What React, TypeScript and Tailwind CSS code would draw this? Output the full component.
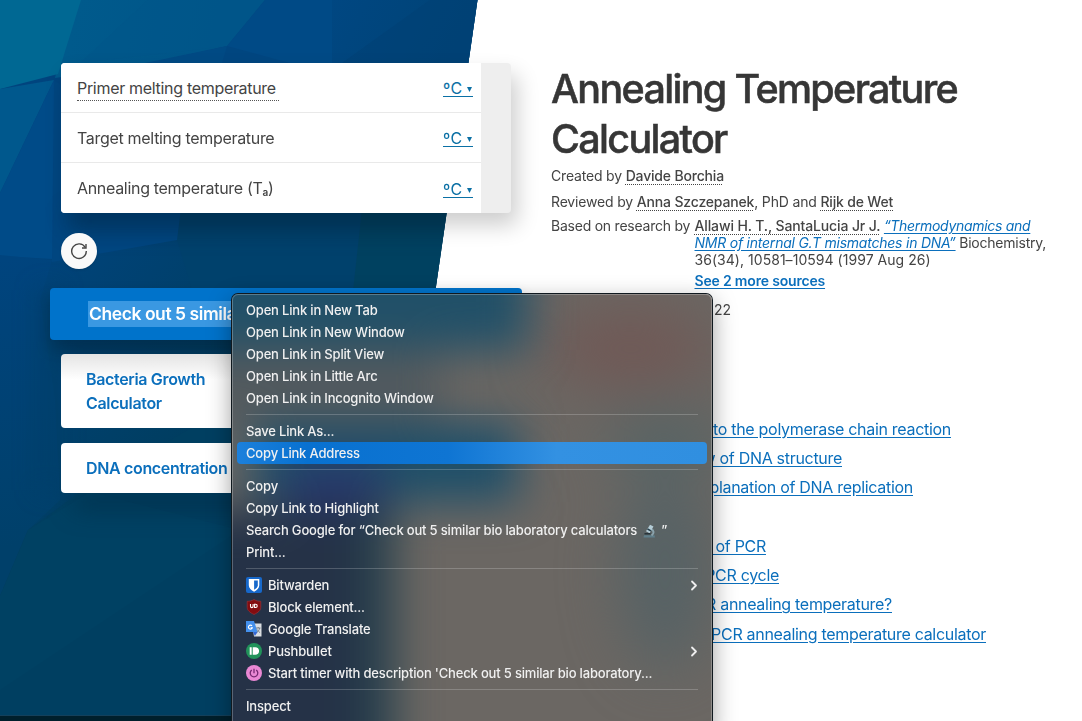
import type { ReactNode } from "react";

function Backdrop() {
  return (
    <svg className="absolute inset-0" width="1082" height="721" viewBox="0 0 1082 721">
      <defs>
        <clipPath id="slant">
          <polygon points="0,0 477.5,0 373,721 0,721" />
        </clipPath>
        <linearGradient id="lower" gradientUnits="userSpaceOnUse" x1="20" y1="230" x2="230" y2="420">
          <stop offset="0" stopColor="#00447e" />
          <stop offset="0.45" stopColor="#004170" />
          <stop offset="1" stopColor="#003d5e" />
        </linearGradient>
        <linearGradient id="left" gradientUnits="userSpaceOnUse" x1="0" y1="260" x2="50" y2="540">
          <stop offset="0" stopColor="#00447e" />
          <stop offset="1" stopColor="#00406a" />
        </linearGradient>
        <linearGradient id="topLeft" gradientUnits="userSpaceOnUse" x1="80" y1="0" x2="240" y2="40">
          <stop offset="0" stopColor="#005a8c" />
          <stop offset="1" stopColor="#005488" />
        </linearGradient>
        <linearGradient id="topRight" gradientUnits="userSpaceOnUse" x1="330" y1="0" x2="450" y2="60">
          <stop offset="0" stopColor="#004782" />
          <stop offset="1" stopColor="#004376" />
        </linearGradient>
        <filter id="soft" colorInterpolationFilters="sRGB"><feGaussianBlur stdDeviation="12" /></filter>
      </defs>
      <g clipPath="url(#slant)">
        <rect width="490" height="721" fill="url(#lower)" />
        <polygon points="0,0 490,0 490,63 55,78" fill="#004680" />
        <polygon points="75,0 265,0 227,46 150,63 55,78" fill="url(#topLeft)" />
        <polygon points="148,0 265,0 227,46 80,63" fill="#00568a" opacity=".5" />
        <polygon points="0,0 81,0 58,74 0,89" fill="#006893" />
        <polygon points="265,0 332,0 332,63 290,63 227,46" fill="#004a86" />
        <polygon points="227,46 222,63 145,63" fill="#004a84" />
        <polygon points="332,0 480,0 470,63 332,63" fill="url(#topRight)" />
        <polygon points="430,0 480,0 470,63 342,63" fill="#004073" opacity=".5" />
        <polygon points="0,89 54,80 0,193" fill="#00588d" />
        <polygon points="0,193 54,80 70,260 0,256" fill="#004b88" />
        <polygon points="54,80 220,200 177,240 52,262" fill="#004680" />
        <polygon points="177,240 182,200 460,200 435,300 195,300" fill="#00416c" />
        <polygon points="363,200 460,200 436,300 352,300" fill="#004160" />
        <polygon points="0,255 52,260 40,300 55,400 60,500 28,530 0,596" fill="url(#left)" />
        <polygon points="28,530 80,492 240,400 373,400 373,721 0,721 0,596" fill="#003f61" />
        <polygon points="28,530 90,492 240,530 0,690 0,596" fill="#004163" />
        <g filter="url(#soft)">
          <rect x="40" y="290" width="18" height="200" fill="#003f68" opacity=".8" />
          <rect x="70" y="214" width="400" height="14" fill="#002844" opacity=".45" />
          <rect x="62" y="340" width="300" height="20" fill="#00253e" opacity=".45" />
          <rect x="74" y="490" width="200" height="20" fill="#00253e" opacity=".5" />
        </g>
      </g>
      <rect y="715" width="373" height="6" fill="#001f2b" />
      <rect y="715" width="373" height="1" fill="#14405a" />
    </svg>
  );
}

function Unit() {
  return (
    <span className="mt-[2px] flex h-[17px] w-[30px] items-center border-b border-[#0b70a5] text-[16px] leading-[16px] text-[#0b70a5]">
      <span className="tracking-[0.2px]">ºC</span>
      <svg className="ml-auto mr-px mt-[3px]" width="5" height="5" viewBox="0 0 5 5"><path d="M0 0h5L2.500 5z" fill="currentColor" /></svg>
    </span>
  );
}

function Row({ children, last }: { children: ReactNode; last?: boolean }) {
  return (
    <div className={last ? "flex h-[50px] items-center justify-between pl-4 pr-2" : "flex h-[50px] items-center justify-between border-b border-[#e9e9e9] pl-4 pr-2"}>
      {children}
      <Unit />
    </div>
  );
}

function Similar({ children, tall }: { children: ReactNode; tall?: boolean }) {
  return (
    <div className={tall ? "mt-[14px] flex h-[74px] w-[450px] items-center rounded bg-white bg-linear-to-b from-[#e4e4e4] via-white via-35% to-white pl-[25px]" : "mt-[15px] flex h-[50px] w-[450px] items-center rounded bg-white pl-[25px]"}>
      <div className="w-[170px] whitespace-nowrap text-[16px] font-semibold leading-6 tracking-[-0.34px] text-[#0b6fbc]">{children}</div>
    </div>
  );
}

function Person({ children }: { children: ReactNode }) {
  return <span className="font-medium underline decoration-dotted decoration-1 underline-offset-[3px]">{children}</span>;
}

function Item({ children, icon, arrow, active }: { children: ReactNode; icon?: ReactNode; arrow?: boolean; active?: boolean }) {
  return (
    <div className={active ? "mx-[5px] flex h-[22px] items-center rounded-[4px] bg-[linear-gradient(90deg,#1c80dc_0%,#0871d0_15%,#0f75d3_45%,#3391e2_68%,#308fe0_100%)] px-[9px]" : "flex h-[22px] items-center px-[14px]"}>
      {icon && <span className="mr-1.5 flex size-4 shrink-0">{icon}</span>}
      <span className="flex items-center whitespace-nowrap pt-[2px]">{children}</span>
      {arrow && (
        <svg className="ml-auto" width="8" height="12" viewBox="0 0 8 12" fill="none" stroke="#eee" strokeWidth="1.8" strokeLinecap="round" strokeLinejoin="round">
          <path d="M2 2.500 6 6.500 2 10.500" />
        </svg>
      )}
    </div>
  );
}

function Separator() {
  return (
    <div className="flex h-[11px] items-center px-[14px]">
      <div className="h-px w-full bg-white/20" />
    </div>
  );
}

const bitwarden = (
  <svg viewBox="0 0 16 16">
    <rect width="16" height="16" rx="2" fill="#1768ca" />
    <path d="M2.800 2h10.500v6.200c0 3-2.400 4.800-5.200 6.500-2.900-1.700-5.300-3.500-5.300-6.500z" fill="#fff" />
    <path d="M8.100 3.500h3.700v4.700c0 1.900-1.500 3.300-3.700 4.600z" fill="#1768ca" />
  </svg>
);
const ublock = (
  <svg viewBox="0 0 16 16">
    <path d="M8 .5c2 1.300 4.400 1.800 6.800 1.800v6c0 3.200-2.700 5.200-6.800 7.200-4.100-2-6.800-4-6.800-7.200v-6C3.600 2.300 6 1.800 8 .5z" fill="#830c10" stroke="#a0383c" strokeWidth=".6" />
    <path d="M4.500 5v2.300a1.300 1.300 0 0 0 2.600 0V5M8.600 5.300v3.200h1a1.600 1.600 0 0 0 0-3.200z" fill="none" stroke="#fff" strokeWidth="1.100" />
  </svg>
);
const translate = (
  <svg viewBox="0 0 16 16">
    <path d="M6 2.500h9.500v13H8z" fill="#dcdfe3" />
    <path d="M0 0h8l3.600 11H0z" fill="#4490ed" />
    <path d="m7 11 4.600 0-2.700 4z" fill="#3367d6" />
    <path d="M6 4.900a2 2 0 1 0 .3 1.900H4.600" fill="none" stroke="#fff" strokeWidth="1.100" />
    <path d="M10 7h4.500M12.200 6v1M13.700 7c-.4 2-1.500 3.300-2.900 4.400M11.300 8.500c.6 1.500 1.700 2.400 2.800 3.200" fill="none" stroke="#6d7986" strokeWidth=".9" />
  </svg>
);
const pushbullet = (
  <svg viewBox="0 0 16 16">
    <circle cx="8" cy="8" r="8" fill="#21935a" />
    <path d="M3.700 4.200h2v7.600h-2zM6.700 4.200h2.500c2.400 0 3.900 1.500 3.900 3.800s-1.500 3.800-3.900 3.800H6.700z" fill="#fff" />
  </svg>
);
const toggl = (
  <svg viewBox="0 0 16 16">
    <circle cx="8" cy="8" r="8" fill="#ea88d4" />
    <path d="M8 3.800v4.400M5.800 5a3.800 3.800 0 1 0 4.400 0" fill="none" stroke="#762a72" strokeWidth="1.300" />
  </svg>
);

function Microscope() {
  return (
    <svg className="ml-[6px] mr-[5px]" width="13" height="14" viewBox="0 0 13 14">
      <path d="M1 11.300h10.500l.5 2.200H.5z" fill="#5f7f8b" />
      <path d="M8 5c3.400 1.500 3.200 4.700.5 6.500" fill="none" stroke="#8aa3ad" strokeWidth="2" />
      <path d="m7 .8 3.500 1.800-3.900 6.600L3 7.200z" fill="#b4ccd6" />
      <path d="m4.900 4.300 3.500 1.900-.8 1.400L4.100 5.700z" fill="#263e4a" />
      <path d="M1.500 9h6v1.500h-6z" fill="#27343a" />
    </svg>
  );
}

function MenuTint() {
  return (
    <svg className="absolute inset-0 -z-10" width="480" height="428" viewBox="232 294 480 428">
      <defs>
        <filter id="b1" x="-80%" y="-80%" width="260%" height="260%" colorInterpolationFilters="sRGB"><feGaussianBlur stdDeviation="28" /></filter>
        <filter id="b2" filterUnits="userSpaceOnUse" x="100" y="160" width="700" height="700" colorInterpolationFilters="sRGB"><feGaussianBlur stdDeviation="22" /></filter>
      </defs>
      <rect x="232" y="294" width="480" height="428" fill="#6b6763" />
      <g filter="url(#b1)">
        <ellipse cx="630" cy="348" rx="85" ry="40" fill="#705956" />
        <ellipse cx="665" cy="440" rx="60" ry="30" fill="#566465" />
        <ellipse cx="665" cy="570" rx="45" ry="100" fill="#566265" />
      </g>
      <g filter="url(#b2)">
        <rect x="100" y="200" width="428" height="150" fill="#215068" />
        <rect x="180" y="348" width="260" height="76" fill="#535a5e" />
        <rect x="252" y="424" width="266" height="78" fill="#1e4f69" />
        <rect x="285" y="465" width="100" height="45" fill="#28376c" />
        <rect x="100" y="510" width="282" height="335" fill="#253247" />
        <rect x="362" y="505" width="32" height="330" fill="#25414d" />
      </g>
    </svg>
  );
}

function ContextMenu() {
  return (
    <div className="absolute left-[232px] top-[294px] isolate h-[440px] w-[480px] overflow-hidden rounded-[6px] pt-[5px] text-[13px] font-medium tracking-[-0.18px] text-[#f0f0f0] shadow-[0_0_0_1px_#10191f,0_8px_24px_rgba(0,0,0,0.4)]">
      <MenuTint />
      <div className="pointer-events-none absolute inset-0 rounded-[6px] border border-white/25" />
      <Item>Open Link in New Tab</Item>
      <Item>Open Link in New Window</Item>
      <Item>Open Link in Split View</Item>
      <Item>Open Link in Little Arc</Item>
      <Item>Open Link in Incognito Window</Item>
      <Separator />
      <Item>Save Link As...</Item>
      <Item active>Copy Link Address</Item>
      <Separator />
      <Item>Copy</Item>
      <Item>Copy Link to Highlight</Item>
      <Item>Search Google for “Check out 5 similar bio laboratory calculators<Microscope />”</Item>
      <Item>Print...</Item>
      <Separator />
      <Item icon={bitwarden} arrow>Bitwarden</Item>
      <Item icon={ublock}>Block element...</Item>
      <Item icon={translate}>Google Translate</Item>
      <Item icon={pushbullet} arrow>Pushbullet</Item>
      <Item icon={toggl}>Start timer with description 'Check out 5 similar bio laboratory...</Item>
      <Separator />
      <Item>Inspect</Item>
    </div>
  );
}

function Topic({ children, className }: { children: ReactNode; className: string }) {
  return (
    <div className={`flex h-[29.2px] items-center justify-end whitespace-nowrap text-[16px] text-[#0b6fbc] underline underline-offset-2 ${className}`}>
      <span>{children}</span>
    </div>
  );
}

export default function App() {
  return (
    <div className="relative isolate flex h-[721px] w-[1082px] overflow-hidden bg-white font-['Inter',sans-serif]">
      <Backdrop />
      <section className="relative flex w-[551px] shrink-0 flex-col pl-[61px] pt-[63px]">
        <div className="flex h-[150px] w-[450px] overflow-hidden rounded bg-[#eee] shadow-[6px_12px_22px_rgba(0,0,0,0.2)]">
          <div className="w-[420px] bg-white text-[16px] text-[#444]">
            <Row>
              <span className="w-[202px] whitespace-nowrap border-b border-dotted border-[#555] pt-[3px] leading-[23px] tracking-[-0.31px]">Primer melting temperature</span>
            </Row>
            <Row><span className="tracking-[-0.31px]">Target melting temperature</span></Row>
            <Row last>
              <span className="tracking-[-0.31px]">Annealing temperature (T<span className="relative top-[2px] text-[10px] font-semibold leading-none">a</span>)</span>
            </Row>
          </div>
        </div>
        <div className="mt-5 flex size-9 items-center justify-center rounded-full bg-[#f9f9f9] shadow">
          <svg width="18" height="18" viewBox="0 0 18 18" fill="none" stroke="#444" strokeWidth="1.400">
            <path d="M15.200 5.300A7.300 7.300 0 1 0 16.300 9" />
            <path d="M16 2v4h-4" />
          </svg>
        </div>
        <div className="-ml-[11px] mt-[19px] flex h-[52px] w-[472px] items-center rounded bg-[#0073cb] pl-[38px] shadow-[0_8px_16px_rgba(0,0,0,0.2)]">
          <span className="whitespace-nowrap bg-[#3a98e2] pl-px text-[17.500px] font-semibold leading-[26px] tracking-[-0.44px] text-white">Check out 5 similar</span>
        </div>
        <Similar tall>Bacteria Growth<br />Calculator</Similar>
        <Similar>DNA concentration</Similar>
      </section>
      <main className="relative w-[531px] pt-[64px] text-[14px] leading-[17px] text-[#444]">
        <h1 className="whitespace-nowrap text-[39.500px] font-medium leading-[50px] tracking-[-1.680px] text-[#363636] [-webkit-text-stroke:0.5px_#363636]">Annealing Temperature<br />Calculator</h1>
        <p className="mt-[3px] tracking-[-0.18px]">Created by <Person>Davide Borchia</Person></p>
        <p className="mt-[9px] tracking-[-0.17px]">Reviewed by <Person>Anna Szczepanek</Person>, PhD and <Person>Rijk de Wet</Person></p>
        <div className="mt-[7px] flex whitespace-nowrap">
          <span className="w-[143.500px] shrink-0 tracking-[-0.23px]">Based on research by</span>
          <div>
            <p className="tracking-[-0.3px]"><span className="tracking-[-0.13px]"><Person>Allawi H. T., SantaLucia Jr J.</Person></span> <em className="text-[#0b6fbc] underline underline-offset-2">“Thermodynamics and</em></p>
            <p className="tracking-[-0.23px]"><em className="text-[#0b6fbc] underline underline-offset-2">NMR of internal G.T mismatches in DNA”</em> Biochemistry,</p>
            <p className="tracking-[0.04px]">36(34), 10581–10594 (1997 Aug 26)</p>
            <p className="mt-1 font-semibold tracking-[-0.18px] text-[#0b6fbc] underline underline-offset-2">See 2 more sources</p>
          </div>
        </div>
        <div className="mt-3 flex w-[180px] justify-end">2022</div>
        <nav className="mt-[97px] tracking-[-0.3px]">
          <Topic className="w-[400px]">n to the polymerase chain reaction</Topic>
          <Topic className="w-[291px]">w of DNA structure</Topic>
          <Topic className="w-[362px]">xplanation of DNA replication</Topic>
          <Topic className="mt-[29.3px] w-[215px]">s of PCR</Topic>
          <Topic className="w-[228px]">PCR cycle</Topic>
          <Topic className="w-[341px]">CR annealing temperature?</Topic>
          <Topic className="w-[435px]">e PCR annealing temperature calculator</Topic>
        </nav>
      </main>
      <ContextMenu />
    </div>
  );
}
